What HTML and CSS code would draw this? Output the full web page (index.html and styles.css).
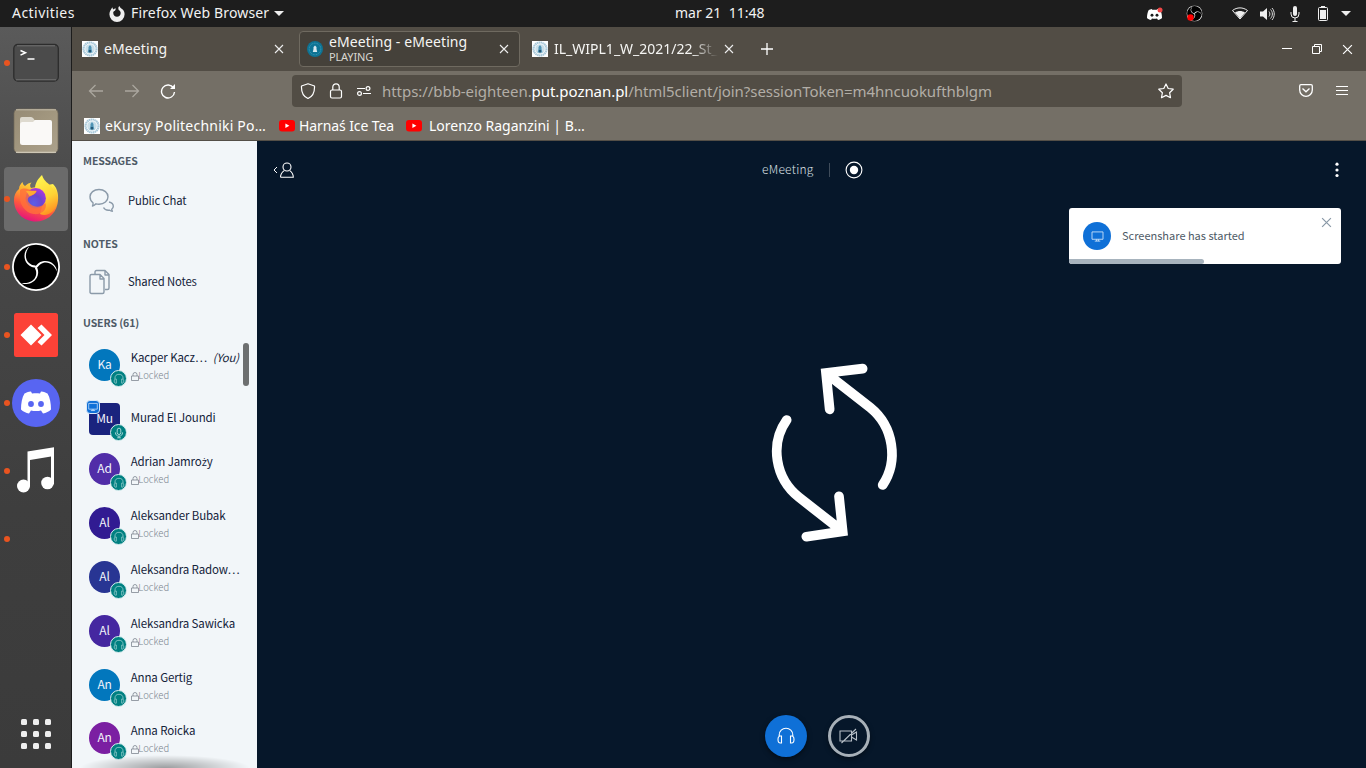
FILE: index.html
```
<!DOCTYPE html>
<html lang="pl">
<head>
<meta charset="utf-8">
<title>eMeeting - eMeeting</title>
<link rel="stylesheet" href="styles.css">
</head>
<body>
<svg class="defs" aria-hidden="true">
  <defs>
    <linearGradient id="flame" x1=".75" y1="0" x2=".35" y2="1"><stop offset="0" stop-color="#fff44f"/><stop offset=".35" stop-color="#ffb02e"/><stop offset=".65" stop-color="#ff5a3c"/><stop offset="1" stop-color="#e5127d"/></linearGradient>
    <linearGradient id="tail" x1=".4" y1="0" x2=".7" y2="1"><stop offset="0" stop-color="#fff44f"/><stop offset=".55" stop-color="#ffd335"/><stop offset="1" stop-color="#ff8a1f"/></linearGradient>
    <radialGradient id="globe" cx=".4" cy=".75" r=".8"><stop offset="0" stop-color="#5a5fe8"/><stop offset=".5" stop-color="#6c46cf"/><stop offset="1" stop-color="#b833e1"/></radialGradient>
    <linearGradient id="folder" x1="0" y1="0" x2="1" y2="1"><stop offset="0" stop-color="#968b75"/><stop offset=".5" stop-color="#a2977f"/><stop offset="1" stop-color="#aba18c"/></linearGradient>
  </defs>
  <symbol id="seal" viewBox="0 0 16 16"><circle cx="8" cy="8" r="6.500" fill="none" stroke="#a9c9da" stroke-width="2.200" stroke-dasharray="1.500 .4"/><circle cx="8" cy="8" r="4.800" fill="#c9dfe9"/><path d="M8 4 9.500 6v2l.9 3.500H5.600L6.500 8V6z" fill="#4f93b4"/><path d="M7.200 9h1.600v2.500H7.200z" fill="#1b4a68"/></symbol>
  <symbol id="close" viewBox="0 0 10 10"><path d="m1 1 8 8M9 1 1 9" fill="none" stroke="currentColor" stroke-width="1.100"/></symbol>
  <symbol id="youtube" viewBox="0 0 16 12"><rect width="16" height="11.500" rx="3" fill="#f00"/><path d="m6.400 3.500 4 2.300-4 2.300z" fill="#fff"/></symbol>
  <symbol id="headset" viewBox="0 0 20 20"><path d="M3.200 10.500V9a6.800 6.800 0 0 1 13.600 0v1.500M5.500 10v7H4.300c-1 0-2.300-1.400-2.300-3.500S3.300 10 4.300 10zM14.500 10v7h1.200c1 0 2.300-1.400 2.300-3.500S16.700 10 15.700 10z" fill="none" stroke="currentColor" stroke-width="1.100"/></symbol>
  <symbol id="mic" viewBox="0 0 20 20"><rect x="7" y="2" width="6" height="10.500" rx="3" fill="none" stroke="currentColor" stroke-width="1.500"/><path d="M4 9c0 8.500 12 8.500 12 0M10 15.500V18M7 18h6" fill="none" stroke="currentColor" stroke-width="1.500"/></symbol>
  <symbol id="screen" viewBox="0 0 14 12"><path d="M1 1h12v8H1zM4 11h6M6 9v2M8 9v2" fill="none" stroke="currentColor"/></symbol>
  <symbol id="lock" viewBox="0 0 8 9"><path d="M.5 4h7v4.500h-7zM2 4V2.500a2 2 0 0 1 4 0V4" fill="none" stroke="currentColor" stroke-width=".8"/></symbol>
  <symbol id="obs" viewBox="0 0 48 48"><circle cx="24" cy="24" r="24" fill="#fff"/><circle cx="24" cy="24" r="22.200" fill="#000"/><g fill="#fff"><path id="arm" d="M17.500 3.500C13 9 12.500 16 17 20c2 1.700 4 2.500 6.500 2.500l1 2.500c-3-.5-6.500-1-9-4C10.500 15 12 7 17.500 3.500z"/><use href="#arm" transform="rotate(120 24 24)"/><use href="#arm" transform="rotate(240 24 24)"/></g></symbol>
  <symbol id="discord" viewBox="0 0 30 22"><path d="M10 0C7 .4 5 1.200 3.500 2 1 6 0 12 0 18c2 2 5 3.500 8 4l2-3c3 .8 7 .8 10 0l2 3c3-.5 6-2 8-4 0-6-1-12-3.500-16C25 1.200 23 .4 20 0l-1 2c-3-.5-5-.5-8 0z" fill="#fff"/><circle cx="10" cy="12.500" r="2.900"/><circle cx="20" cy="12.500" r="2.900"/></symbol>
</svg>

<header class="topbar">
  <span class="activities">Activities</span>
  <svg class="app-icon" viewBox="0 0 16 16"><path d="M3.300 1.200 4.200 3.500C5 2.800 6 2.500 7 2.600L6 4.700C4.900 4.900 4.300 5.500 4.200 6.800c.1 2.400 1.700 4 3.800 4s3.700-1.600 3.700-3.700c0-1.500-.8-2.600-2-3.200C9 2 9.300.9 10.500 0c.3 1.800 1.400 2 2.900 3.300 1.500 1.300 2.200 3 2.200 5a7.600 7.600 0 0 1-15.200 0c0-1.300.4-2.600 1-3.700z" fill="#eee"/></svg>
  <span class="app-name">Firefox Web Browser</span>
  <span class="caret"></span>
  <span class="clock">mar 21&nbsp; 11:48</span>
  <div class="tray">
    <svg class="tray-discord" viewBox="0 0 16 14"><g class="dark-eyes"><use href="#discord" x="0" y="2" width="15" height="11"/></g><circle cx="13" cy="3" r="2.500" fill="#f04747"/></svg>
    <svg class="tray-obs" viewBox="0 0 17 17"><use href="#obs" x=".5" y=".5" width="16" height="16"/><circle cx="4.500" cy="12.500" r="3.200" fill="#f00"/></svg>
    <svg class="tray-wifi" viewBox="0 0 16 13"><path d="M.5 3.500C5 0 11 0 15.500 3.500L8 12z" fill="none" stroke="#eee"/><path d="M3 5.500c3-2 7-2 10 0l-5 6z" fill="#eee"/></svg>
    <svg class="tray-sound" viewBox="0 0 16 14"><path d="M0 4.500h3L7 1v12L3 9.500H0z" fill="#eee"/><path d="M9 4.500c1.200 1.500 1.200 3.500 0 5M10.500 2.500c2.500 2.500 2.500 6.500 0 9M12 1c3 3.500 3 8.500 0 12" fill="none" stroke="#ddd"/></svg>
    <svg class="tray-mic" viewBox="0 0 10 16"><rect x="3" width="4" height="10" rx="2" fill="#eee"/><path d="M1 6v2a4 4 0 0 0 8 0V6M5 12v3M2.500 15.500h5" fill="none" stroke="#eee"/></svg>
    <svg class="tray-battery" viewBox="0 0 10 15"><path d="M3 0h4v2H3zM2 4h6v9H2z" fill="#eee"/><rect x=".5" y="1.500" width="9" height="13" rx="1" fill="none" stroke="#eee"/></svg>
    <span class="caret"></span>
  </div>
</header>

<div class="desktop">
  <nav class="dock">
    <div class="dock-item running"><svg viewBox="0 0 48 48"><rect x="1.800" y="5.500" width="44.500" height="36.500" rx="4" fill="#4b4b4b" stroke="#2c2c2c" stroke-width="1.300"/><path d="M4 40.800h40M5 6.800h38" stroke="#727272"/><path d="m8.500 11.500 5 2.300-5 2.300M15.500 20h7" fill="none" stroke="#fff" stroke-width="1.500"/></svg></div>
    <div class="dock-item"><svg viewBox="0 0 48 48"><rect x="2" y="2" width="44" height="44" rx="4.500" fill="url(#folder)" stroke="#736a5a" stroke-width=".7"/><path d="M4 2.800h40" stroke="#c4bcaa"/><path d="M4 45.300h40" stroke="#ddd6c6"/><path d="M8 20v-8q0-2 2-2h9q1.500 0 2.500 1.500l1 1.500h13v7z" fill="#dedacf"/><path d="M8 18q0-3 2.500-3h10.500l2-2H38q2 0 2 2v20.500q0 2.500-2.500 2.500h-27Q8 38 8 35.500z" fill="#faf9f7"/></svg></div>
    <div class="dock-item running active"><svg viewBox="0 0 48 48"><path d="M7 14c0-3 2-5.500 3.500-7 .3 2 1.200 3.200 2.500 4 2-2 4.500-3.200 6.500-3.500C18 9 17.500 11 19 13L41 9c5 5 6 12 4.500 20C43 40 34 46.500 24 46.500 11 46.500 2 37 2 25c0-4.500 1.500-8 5-11z" fill="url(#flame)"/><path d="M23 13c.5-6 3.500-9.500 7-13 2 7 7 8 9.500 12l2.500 3-1-4c6 7 6 18 0 25-4 4-9 5-13 3l5-17z" fill="url(#tail)"/><circle cx="23.700" cy="23.200" r="10.200" fill="url(#globe)"/><path d="M8 15c4-3 9-1 11.500.5h5c0 3-3 4-5.500 5.500-3 1-4 3-2.500 6 4 6 12 6 17 1 2 7-4 12-12 11C13 38 8 29 8 23z" fill="#ff703b" opacity=".8"/><path d="M14 16h10.500c-1 3-5 4.500-7 5z" fill="#ffab31"/></svg></div>
    <div class="dock-item running"><svg viewBox="0 0 48 48"><use href="#obs"/></svg></div>
    <div class="dock-item running"><svg viewBox="0 0 48 48"><rect x="2" y="2" width="44" height="44" rx="2.500" fill="#fc4237"/><path d="M8.500 24 19 13.500 29.500 24 19 34.500zM25.500 17l4-3.500L40 24 29.500 34.500l-4-3.500 7-7z" fill="#fff"/></svg></div>
    <div class="dock-item running"><svg viewBox="0 0 48 48"><circle cx="24" cy="24" r="24" fill="#5865f2"/><g class="blurple-eyes"><use href="#discord" x="9" y="12" width="30" height="23"/></g></svg></div>
    <div class="dock-item running"><svg viewBox="0 0 48 48"><path d="M15.500 4.500 42 .2v37h-3V9.500L18 13v26.500h-2.500z" fill="#fff"/><circle cx="11.500" cy="39" r="6.500" fill="#fff"/><circle cx="35.500" cy="36" r="6.300" fill="#fff"/></svg></div>
    <div class="dock-item running"></div>
    <div class="dock-item apps"><svg viewBox="0 0 30 30" fill="#eee"><rect width="6" height="6" rx="1.500"/><rect x="12" width="6" height="6" rx="1.500"/><rect x="24" width="6" height="6" rx="1.500"/><rect y="12" width="6" height="6" rx="1.500"/><rect x="12" y="12" width="6" height="6" rx="1.500"/><rect x="24" y="12" width="6" height="6" rx="1.500"/><rect y="24" width="6" height="6" rx="1.500"/><rect x="12" y="24" width="6" height="6" rx="1.500"/><rect x="24" y="24" width="6" height="6" rx="1.500"/></svg></div>
  </nav>

  <main class="browser">
    <div class="tabs">
      <div class="tab tab-first"><svg class="favicon"><use href="#seal"/></svg><span class="tab-title">eMeeting</span><svg class="tab-close"><use href="#close"/></svg></div>
      <div class="tab tab-active"><svg class="favicon-round" viewBox="0 0 16 16"><circle cx="8" cy="8" r="8" fill="#0d7394"/><circle cx="8" cy="8" r="5.800" fill="none" stroke="#3b9bb8" stroke-dasharray="1 .7"/><path d="M8 4.500 9.500 6v2l.7 3H5.800l.7-3V6z" fill="#d5e8ef"/></svg><span class="tab-title">eMeeting - eMeeting<small>PLAYING</small></span><svg class="tab-close"><use href="#close"/></svg></div>
      <div class="tab tab-last"><svg class="favicon"><use href="#seal"/></svg><span class="tab-title fade">IL_WIPL1_W_2021/22_St_</span><svg class="tab-close"><use href="#close"/></svg></div>
      <svg class="new-tab" viewBox="0 0 12 12"><path d="M6 0v12M0 6h12" stroke="#fff" stroke-width="1.300"/></svg>
      <svg class="win-min" viewBox="0 0 10 10"><path d="M0 4.500h10" stroke="#fff"/></svg>
      <svg class="win-max" viewBox="0 0 10 10"><path d="M.5 2.500h7v7h-7zM2.500 2V.5h7v7H8" fill="none" stroke="#fff"/></svg>
      <svg class="win-close"><use href="#close"/></svg>
    </div>

    <div class="toolbar">
      <svg class="nav-icon dim" viewBox="0 0 16 16"><path d="M15 8H1.500M7.500 2l-6 6 6 6"/></svg>
      <svg class="nav-icon dim" viewBox="0 0 16 16"><path d="M1 8h13.500M8.500 2l6 6-6 6"/></svg>
      <svg class="nav-icon" viewBox="0 0 16 16"><path d="M13.500 5A6.500 6.500 0 1 0 14.500 9" stroke-width="1.400"/><path d="M15 1v5H10z" fill="#fff" stroke="none"/></svg>
      <div class="urlbar">
        <svg class="url-icon" viewBox="0 0 16 16"><path d="M8 .8 14.500 3c.3 6-2 10.500-6.500 12.500C3.500 13.500 1.200 9 1.500 3z"/></svg>
        <svg class="url-icon" viewBox="0 0 16 16"><rect x="2.500" y="7" width="11" height="8" rx="1.500"/><path d="M4.800 7V4a3.200 3.200 0 0 1 6.400 0v3"/></svg>
        <svg class="url-icon" viewBox="0 0 16 16"><path d="M1 5.500h8M7 10.500h8"/><circle cx="12" cy="5.500" r="1.900"/><circle cx="3.500" cy="10.500" r="1.900"/></svg>
        <span class="url">https://bbb-eighteen.<b>put.poznan.pl</b>/html5client/join?sessionToken=m4hncuokufthblgm</span>
        <svg class="url-icon star" viewBox="0 0 16 16"><path d="m8 1 2.200 4.500 5 .7-3.600 3.500.9 5L8 12.400 3.500 14.700l.9-5L.8 6.200l5-.7z"/></svg>
      </div>
      <svg class="pocket" viewBox="0 0 14 13"><path d="M2 .7h10q1.300 0 1.300 1.300v4a6.300 6.300 0 0 1-12.600 0V2Q.7.700 2 .7zM3.500 4.500 7 7.800l3.500-3.300" fill="none" stroke="#fff" stroke-width="1.300"/></svg>
      <svg class="menu" viewBox="0 0 12 11"><path d="M0 1.500h12M0 5.500h12M0 9.500h12" stroke="#fff"/></svg>
    </div>

    <div class="bookmarks">
      <svg class="favicon"><use href="#seal"/></svg><span class="bm-1">eKursy Politechniki Po…</span>
      <svg class="yt"><use href="#youtube"/></svg><span class="bm-2">Harnaś Ice Tea</span>
      <svg class="yt"><use href="#youtube"/></svg><span class="bm-3">Lorenzo Raganzini | B…</span>
    </div>

    <div class="page">
      <aside class="sidebar">
        <h2>MESSAGES</h2>
        <div class="link link-chat"><svg viewBox="0 0 26 26"><path d="M10 1.500c5.200 0 9 3.200 9 7.300s-3.800 7.400-9 7.400c-1 0-2-.1-3-.4-.8 1-2 1.900-3.500 2.200.5-1.100.7-2.100.5-3.300C2 13.300 1 11.200 1 8.800c0-4.100 3.800-7.300 9-7.300z"/><path d="M20 14c3 .7 4.300 2.300 4.300 4.300 0 1.300-.6 2.300-1.600 3 0 .9.300 1.500.7 2-1.200 0-2-.4-2.700-1.200-3 .4-5.200-.6-6.200-2.600"/></svg>Public Chat</div>
        <h2>NOTES</h2>
        <div class="link link-notes"><svg viewBox="0 0 26 26"><path d="M6 5V3q0-1.500 1.500-1.500H16l4 4V19q0 1.500-1.500 1.500H16M16 1.500V6h4"/><path d="M2.500 5.500H11l4 4V23q0 1.500-1.500 1.500h-11Q1 24.500 1 23V7q0-1.500 1.500-1.500zM11 5.500V10h4"/></svg>Shared Notes</div>
        <h2>USERS (61)</h2>
        <div class="users">
          <div class="user"><div class="avatar blue">Ka<i class="badge"><svg><use href="#headset"/></svg></i></div><div class="who"><div class="name you"><span>Kacper Kacz…</span><em>(You)</em></div><div class="locked"><svg><use href="#lock"/></svg>Locked</div></div></div>
          <div class="user presenter"><div class="avatar navy">Mu<i class="share"><svg><use href="#screen"/></svg></i><i class="badge"><svg><use href="#mic"/></svg></i></div><div class="who"><div class="name">Murad El Joundi</div></div></div>
          <div class="user"><div class="avatar violet">Ad<i class="badge"><svg><use href="#headset"/></svg></i></div><div class="who"><div class="name">Adrian Jamro<span class="latin-ext">ż</span>y</div><div class="locked"><svg><use href="#lock"/></svg>Locked</div></div></div>
          <div class="user"><div class="avatar deep">Al<i class="badge"><svg><use href="#headset"/></svg></i></div><div class="who"><div class="name">Aleksander Bubak</div><div class="locked"><svg><use href="#lock"/></svg>Locked</div></div></div>
          <div class="user"><div class="avatar indigo">Al<i class="badge"><svg><use href="#headset"/></svg></i></div><div class="who"><div class="name">Aleksandra Radow…</div><div class="locked"><svg><use href="#lock"/></svg>Locked</div></div></div>
          <div class="user"><div class="avatar purple">Al<i class="badge"><svg><use href="#headset"/></svg></i></div><div class="who"><div class="name">Aleksandra Sawicka</div><div class="locked"><svg><use href="#lock"/></svg>Locked</div></div></div>
          <div class="user user-short"><div class="avatar blue">An<i class="badge"><svg><use href="#headset"/></svg></i></div><div class="who"><div class="name">Anna Gertig</div><div class="locked"><svg><use href="#lock"/></svg>Locked</div></div></div>
          <div class="user"><div class="avatar magenta">An<i class="badge"><svg><use href="#headset"/></svg></i></div><div class="who"><div class="name">Anna Roicka</div><div class="locked"><svg><use href="#lock"/></svg>Locked</div></div></div>
          <div class="scroll-thumb"></div>
          <div class="scroll-shadow"></div>
        </div>
      </aside>

      <section class="meeting">
        <div class="meeting-bar">
          <svg class="toggle-users" viewBox="0 0 21 16"><path d="M4 5 1 8l3 3" stroke-width="1"/><circle cx="14" cy="5" r="4"/><path d="M7.500 15.300c0-3 1.300-5 3.700-6.700M16.800 8.600c2.200 1.700 3.500 3.700 3.500 6.700H7.500"/></svg>
          <div class="meeting-title"><span>eMeeting</span><i></i><svg viewBox="0 0 18 18"><circle cx="9" cy="9" r="7.900" fill="none" stroke="#fff" stroke-width="1.100"/><circle cx="9" cy="9" r="4.200" fill="#fff"/></svg></div>
          <svg class="options" viewBox="0 0 4 16" fill="#fff"><circle cx="2" cy="2.200" r="1.600"/><circle cx="2" cy="8" r="1.600"/><circle cx="2" cy="13.500" r="1.600"/></svg>
        </div>
        <div class="stage">
          <svg class="sync" viewBox="0 0 510 630"><path d="M338 56 228 69l11 109M234 74l127 99c70 57 85 160 37 232"/><path d="M110 210c-51 72-35 175 37 232l127 99M267 439l11 105-109 16"/></svg>
        </div>
        <div class="actions">
          <div class="act-audio"><svg><use href="#headset"/></svg></div>
          <div class="act-video"><svg viewBox="0 0 20 16"><path d="M1 3h11.500v10H1zM12.500 7l5-3v8l-5-3M2.500 15 17 1"/></svg></div>
        </div>
        <div class="toast">
          <div class="toast-icon"><svg><use href="#screen"/></svg></div>
          <span>Screenshare has started</span>
          <svg class="toast-close"><use href="#close"/></svg>
          <div class="toast-progress"></div>
        </div>
      </section>
    </div>
  </main>
</div>
</body>
</html>
```
FILE: styles.css
```
* { box-sizing: border-box; }
body { margin: 0; width: 1366px; height: 768px; overflow: hidden; font-family: "Noto Sans", sans-serif; font-size: 14px; color: #fff; background: #06172a; }
svg { display: block; flex: none; }
.defs { position: absolute; width: 0; height: 0; }

.topbar { display: flex; align-items: center; height: 27px; padding-left: 12px; background: #1d1d1d; color: #f2f2f2; line-height: 26px; white-space: nowrap; }
.activities, .app-name, .clock { margin-top: -2px; }
.activities { width: 97px; letter-spacing: .45px; }
.app-icon { width: 16px; height: 16px; margin-right: 6px; }
.app-name { width: 143px; letter-spacing: .15px; }
.caret { border: 5px solid transparent; border-top-color: #eee; border-bottom: 0; }
.clock { margin-left: 391px; flex: 1; }
.tray { display: flex; align-items: center; padding-right: 15px; }
.tray-discord { width: 16px; height: 14px; margin-right: 23px; }
.dark-eyes { fill: #1d1d1d; }
.blurple-eyes { fill: #5865f2; }
.tray-obs { width: 17px; height: 17px; margin-right: 29px; }
.tray-wifi { width: 16px; height: 13px; margin-right: 12px; }
.tray-sound { width: 16px; height: 14px; margin-right: 14px; }
.tray-mic { width: 10px; height: 16px; margin-right: 18px; }
.tray-battery { width: 10px; height: 15px; margin-right: 13px; }

.desktop { display: flex; height: 741px; }
.dock { display: flex; flex-direction: column; gap: 4px; width: 72px; padding: 4px 4px 2px; background: linear-gradient(#5a5a5a, #484848 25%, #3e3e3e 65%, #3b3b3b); border-right: 1px solid #1c1c1c; }
.dock-item { position: relative; display: flex; align-items: center; justify-content: center; width: 64px; height: 64px; border-radius: 4px; }
.dock-item svg { width: 48px; height: 48px; }
.running::before { content: ""; position: absolute; left: 0; top: 29px; width: 6px; height: 6px; border-radius: 50%; background: #e95420; }
.active { background: #6b6b6b; }
.apps { margin-top: auto; }
.apps svg { width: 30px; height: 30px; }

.browser { flex: 1; min-width: 0; }
.tabs { display: flex; align-items: center; height: 44px; background: #524d45; }
.tab { display: flex; align-items: center; }
.tab-title { white-space: nowrap; line-height: 18px; color: #f5f5f3; }
.favicon { width: 16px; height: 16px; background: #fff; }
.favicon-round { width: 16px; height: 16px; }
.tab-close { width: 10px; height: 10px; margin-left: auto; color: #eee; }
.tab-first { width: 227px; padding: 0 15px 0 10px; gap: 6px; }
.tab-first .tab-title { letter-spacing: .1px; }
.tab-active { width: 221px; height: 36px; padding: 0 10px 0 7px; gap: 6px; background: #45413a; border: 1px solid #6f6a60; border-radius: 4px; }
.tab-active .tab-title { line-height: 15px; letter-spacing: .1px; }
.tab-title small { display: block; font-size: 11px; line-height: 16px; letter-spacing: -.15px; color: #dad7d1; }
.tab-last { width: 225px; padding: 0 11px 0 12px; gap: 6px; }
.fade { width: 169px; overflow: hidden; -webkit-mask-image: linear-gradient(90deg, #000 84%, transparent); mask-image: linear-gradient(90deg, #000 84%, transparent); }
.new-tab { width: 12px; height: 12px; margin-left: 16px; margin-right: auto; }
.win-min, .win-max { width: 10px; height: 10px; margin-right: 20px; }
.win-close { width: 11px; height: 11px; margin-right: 13px; }

.toolbar { display: flex; align-items: center; height: 41px; padding: 0 0 2px 16px; background: #746f66; }
.nav-icon { width: 16px; height: 16px; margin-top: 1px; margin-right: 20px; fill: none; stroke: #fff; stroke-width: 1.3; }
.dim { stroke: #aaa69e; }
.urlbar { display: flex; align-items: center; width: 890px; height: 32px; margin-left: 96px; padding: 0 8px; border-radius: 4px; background: #524d45; }
.url-icon { width: 16px; height: 16px; margin-right: 12px; fill: none; stroke: #fff; stroke-width: 1.2; stroke-linejoin: round; }
.url { margin-left: -2px; font-size: 15px; line-height: 30px; letter-spacing: -.05px; color: #b2aea7; white-space: nowrap; }
.url b { font-weight: 400; color: #fff; }
.star { margin-left: auto; margin-right: 0; }
.pocket { width: 14px; height: 13px; margin-left: 117px; }
.menu { width: 12px; height: 11px; margin-left: 23px; }

.bookmarks { display: flex; align-items: center; height: 29px; padding-left: 12px; background: #746f66; border-bottom: 1px solid #544f47; line-height: 26px; white-space: nowrap; }
.bm-1 { width: 174px; margin-left: 5px; letter-spacing: .22px; }
.bm-2 { width: 107px; margin-left: 4px; letter-spacing: -.1px; }
.bm-3 { margin-left: 7px; }
.yt { width: 16px; height: 12px; }

.page { display: flex; height: 627px; font-family: "Noto Sans CJK SC", sans-serif; font-size: 11.5px; }
.sidebar { width: 185px; background: #f2f6f9; color: #14233a; }
.sidebar h2 { margin: 0; height: 40px; padding-left: 11px; font-size: 10.5px; font-weight: 700; line-height: 40px; letter-spacing: -.08px; color: #4e5a66; }
.link { display: flex; align-items: center; height: 40px; padding: 0 0 2px 17px; gap: 13px; font-size: 11.3px; letter-spacing: -.15px; }
.link svg { width: 26px; height: 26px; margin-top: 1px; fill: none; stroke: #8b9aa9; stroke-width: 1.4; stroke-linejoin: round; }
.link-chat { margin-bottom: 3px; }
.link-notes { height: 38px; margin-bottom: 1px; padding-bottom: 4px; }
.users { position: relative; height: 425px; padding: 6px 17px 0; overflow: hidden; }
.user { display: flex; gap: 11px; height: 54px; }
.presenter { height: 50px; }
.user-short { height: 53px; }
.avatar { position: relative; flex: none; width: 31px; height: 32px; border-radius: 50%; font-size: 12px; line-height: 30px; letter-spacing: -.2px; text-align: center; color: #f1f3fa; }
.blue { background: #0277bd; }
.navy { background: #1a237e; border-radius: 4px; }
.violet { background: #512da8; }
.deep { background: #311b92; }
.indigo { background: #283593; }
.purple { background: #4527a0; }
.magenta { background: #7b1fa2; }
.badge { position: absolute; left: 21px; top: 21px; width: 17px; height: 17px; padding: 1.5px; border: 1px solid #d9edef; border-radius: 50%; background: #008081; color: #b5dede; }
.badge svg { width: 12px; height: 12px; }
.share { position: absolute; left: -3px; top: -3px; width: 14px; height: 14px; padding: 1px; border: 1px solid #d9e8f8; border-radius: 4px; background: #0f70d7; color: #d8eaff; }
.share svg { width: 10px; height: 10px; }
.who { width: 112px; margin-left: -.3px; }
.name { height: 17px; line-height: 16px; letter-spacing: -.12px; white-space: nowrap; }
.latin-ext { font-family: "Open Sans", sans-serif; font-size: 11px; line-height: 1; }
.you { display: flex; justify-content: space-between; }
.you em { font-size: 11.3px; margin-right: 1px; letter-spacing: -.1px; }
.presenter .name { padding-top: 6px; }
.locked { display: flex; align-items: center; height: 19px; font-size: 9.5px; font-weight: 300; line-height: 17px; color: #7d8791; }
.locked svg { width: 8px; height: 9px; margin-top: 1px; margin-right: -.4px; }
.scroll-thumb { position: absolute; left: 171px; top: 0; width: 6px; height: 43px; border-radius: 3px; background: #6d6f70; }
.scroll-shadow { position: absolute; left: 8px; bottom: 0; width: 170px; height: 13px; background: radial-gradient(ellipse 50% 100% at 50% 100%, rgba(0,0,0,.36), transparent); }

.meeting { position: relative; flex: 1; display: flex; flex-direction: column; background: #06172a; }
.meeting-bar { display: flex; align-items: center; height: 58px; padding: 0 27px 0 16px; }
.toggle-users { width: 21px; height: 16px; margin-top: -1px; fill: none; stroke: #fff; stroke-width: 1.1; }
.meeting-title { display: flex; align-items: center; flex: 1; padding-left: 468px; font-size: 12px; font-weight: 300; line-height: 24px; letter-spacing: .25px; color: #dce1e6; }
.meeting-title span { margin-top: -2px; }
.meeting-title i { width: 1px; height: 14px; margin: 0 15px; background: #3f4c5a; }
.meeting-title svg { width: 18px; height: 18px; }
.options { width: 4px; height: 16px; margin-top: -1px; }
.stage { flex: 1; padding: 151px 0 0 493px; }
.sync { width: 170px; height: 210px; fill: none; stroke: #fff; stroke-width: 29; stroke-linecap: round; stroke-linejoin: miter; }
.actions { display: flex; gap: 21px; height: 53px; padding-left: 508px; }
.act-audio, .act-video { display: flex; align-items: center; justify-content: center; width: 42px; height: 42px; border-radius: 50%; }
.act-audio { background: #0f70d7; box-shadow: 0 2px 5px rgba(0,0,0,.5); }
.act-audio svg { width: 20px; height: 20px; }
.act-video { border: 3px solid #a7b0b8; box-shadow: 0 2px 5px rgba(0,0,0,.4); }
.act-video svg { width: 20px; height: 16px; fill: none; stroke: #b7bfc7; stroke-width: 1.1; }
.toast { position: absolute; left: 812px; top: 67px; display: flex; align-items: center; width: 272px; height: 56px; padding-left: 14px; gap: 11px; border-radius: 3px; background: #fff; font-size: 11px; color: #4e5a66; overflow: hidden; }
.toast span { margin-top: -2px; }
.toast-icon { display: flex; align-items: center; justify-content: center; width: 28px; height: 28px; border-radius: 50%; background: #0f70d7; color: #c5def8; }
.toast-icon svg { width: 13px; height: 11px; }
.toast-close { width: 11px; height: 11px; margin: -28px 9px 0 auto; color: #8b9aa8; }
.toast-progress { position: absolute; left: 0; bottom: 0; width: 135px; height: 5px; border-radius: 0 3px 3px 0; background: #a7b3bd; }
```
